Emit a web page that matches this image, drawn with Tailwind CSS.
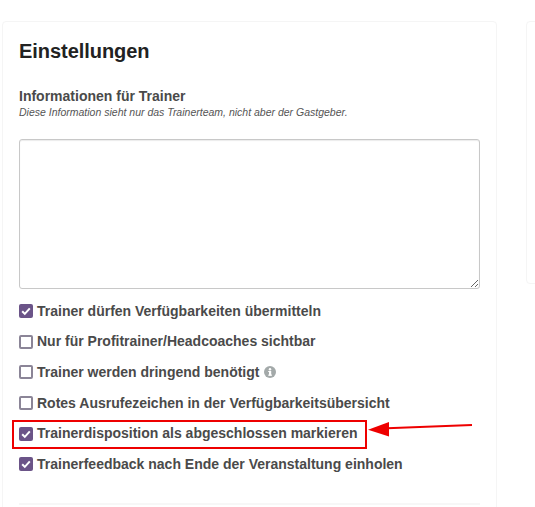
<!DOCTYPE html>
<html lang="de">
<head>
<meta charset="utf-8">
<title>Einstellungen</title>
<script src="https://cdn.jsdelivr.net/npm/@tailwindcss/browser@4"></script>
</head>
<body class="bg-white overflow-hidden font-['Liberation_Sans',Arial,sans-serif] text-[#4a4a4a]">
<div class="relative h-[507px] w-[535px] overflow-hidden">
	<div class="flex items-start gap-[29px] pl-[2px] pt-[21px]">

		<div class="w-[495px] h-[600px] shrink-0 rounded border border-[#f5f5f5] px-[16px] pt-[16px]">
			<h2 class="text-[20px] leading-[26px] font-bold text-[#222222] tracking-[-0.05px]">Einstellungen</h2>

			<div class="mt-[23px]">
				<label class="block text-[14px] leading-[18px] font-bold">Informationen für Trainer</label>
				<p class="mt-[1px] text-[10.5px] leading-[12px] italic text-[#555555]">Diese Information sieht nur das Trainerteam, nicht aber der Gastgeber.</p>
			</div>

			<textarea class="block mt-[21px] w-[461px] h-[150px] rounded-[3px] border border-[#c8c8c8] bg-white shadow-[inset_0_1px_1px_rgba(0,0,0,0.08)]"></textarea>

			<div class="mt-[7px] flex flex-col text-[14px] font-bold">
				<label class="flex items-center gap-[4px] h-[30.6px]">
					<span class="flex items-center justify-center size-[14px] rounded-[2px] bg-[#6b5488]">
						<svg viewBox="0 0 14 14" class="size-[14px]"><path d="M3.2 7.2 5.8 9.9 10.8 4.4" fill="none" stroke="#fff" stroke-width="2"/></svg>
					</span>
					Trainer dürfen Verfügbarkeiten übermitteln
				</label>
				<label class="flex items-center gap-[4px] h-[30.6px]">
					<span class="size-[14px] rounded-[2px] border-2 border-[#8b8597] bg-white"></span>
					Nur für Profitrainer/Headcoaches sichtbar
				</label>
				<label class="flex items-center gap-[4px] h-[30.6px]">
					<span class="size-[14px] rounded-[2px] border-2 border-[#8b8597] bg-white"></span>
					Trainer werden dringend benötigt
					<svg viewBox="0 0 12 12" class="size-[12px] ml-[1px]"><circle cx="6" cy="6" r="6" fill="#a3a9a9"/><rect x="5" y="5" width="2.2" height="4.6" fill="#fff"/><rect x="4.2" y="8.6" width="3.8" height="1.1" fill="#fff"/><rect x="4.2" y="5" width="2" height="1" fill="#fff"/><circle cx="6" cy="3.2" r="1.2" fill="#fff"/></svg>
				</label>
				<label class="flex items-center gap-[4px] h-[30.6px]">
					<span class="size-[14px] rounded-[2px] border-2 border-[#8b8597] bg-white"></span>
					Rotes Ausrufezeichen in der Verfügbarkeitsübersicht
				</label>
				<label class="flex items-center gap-[4px] h-[30.6px]">
					<span class="flex items-center justify-center size-[14px] rounded-[2px] bg-[#6b5488]">
						<svg viewBox="0 0 14 14" class="size-[14px]"><path d="M3.2 7.2 5.8 9.9 10.8 4.4" fill="none" stroke="#fff" stroke-width="2"/></svg>
					</span>
					Trainerdisposition als abgeschlossen markieren
				</label>
				<label class="flex items-center gap-[4px] h-[30.6px]">
					<span class="flex items-center justify-center size-[14px] rounded-[2px] bg-[#6b5488]">
						<svg viewBox="0 0 14 14" class="size-[14px]"><path d="M3.2 7.2 5.8 9.9 10.8 4.4" fill="none" stroke="#fff" stroke-width="2"/></svg>
					</span>
					Trainerfeedback nach Ende der Veranstaltung einholen
				</label>
			</div>

			<hr class="mt-[23px] border-t-2 border-[#f7f7f7]">
		</div>

		<div class="w-[200px] h-[263px] shrink-0 rounded border border-[#f5f5f5]"></div>
	</div>

	<!-- red annotation on top of the screenshot -->
	<div class="absolute left-[12px] top-[420px] w-[355px] h-[29px] border-2 border-[#ee0000]"></div>
	<svg class="absolute left-[365px] top-[420px]" width="112" height="20" viewBox="0 0 112 20">
		<path d="M107 5 22 8.2" stroke="#ee0000" stroke-width="2" fill="none"/>
		<path d="M3 9.8 24 2 24 16.5Z" fill="#ee0000"/>
	</svg>
</div>
</body>
</html>
